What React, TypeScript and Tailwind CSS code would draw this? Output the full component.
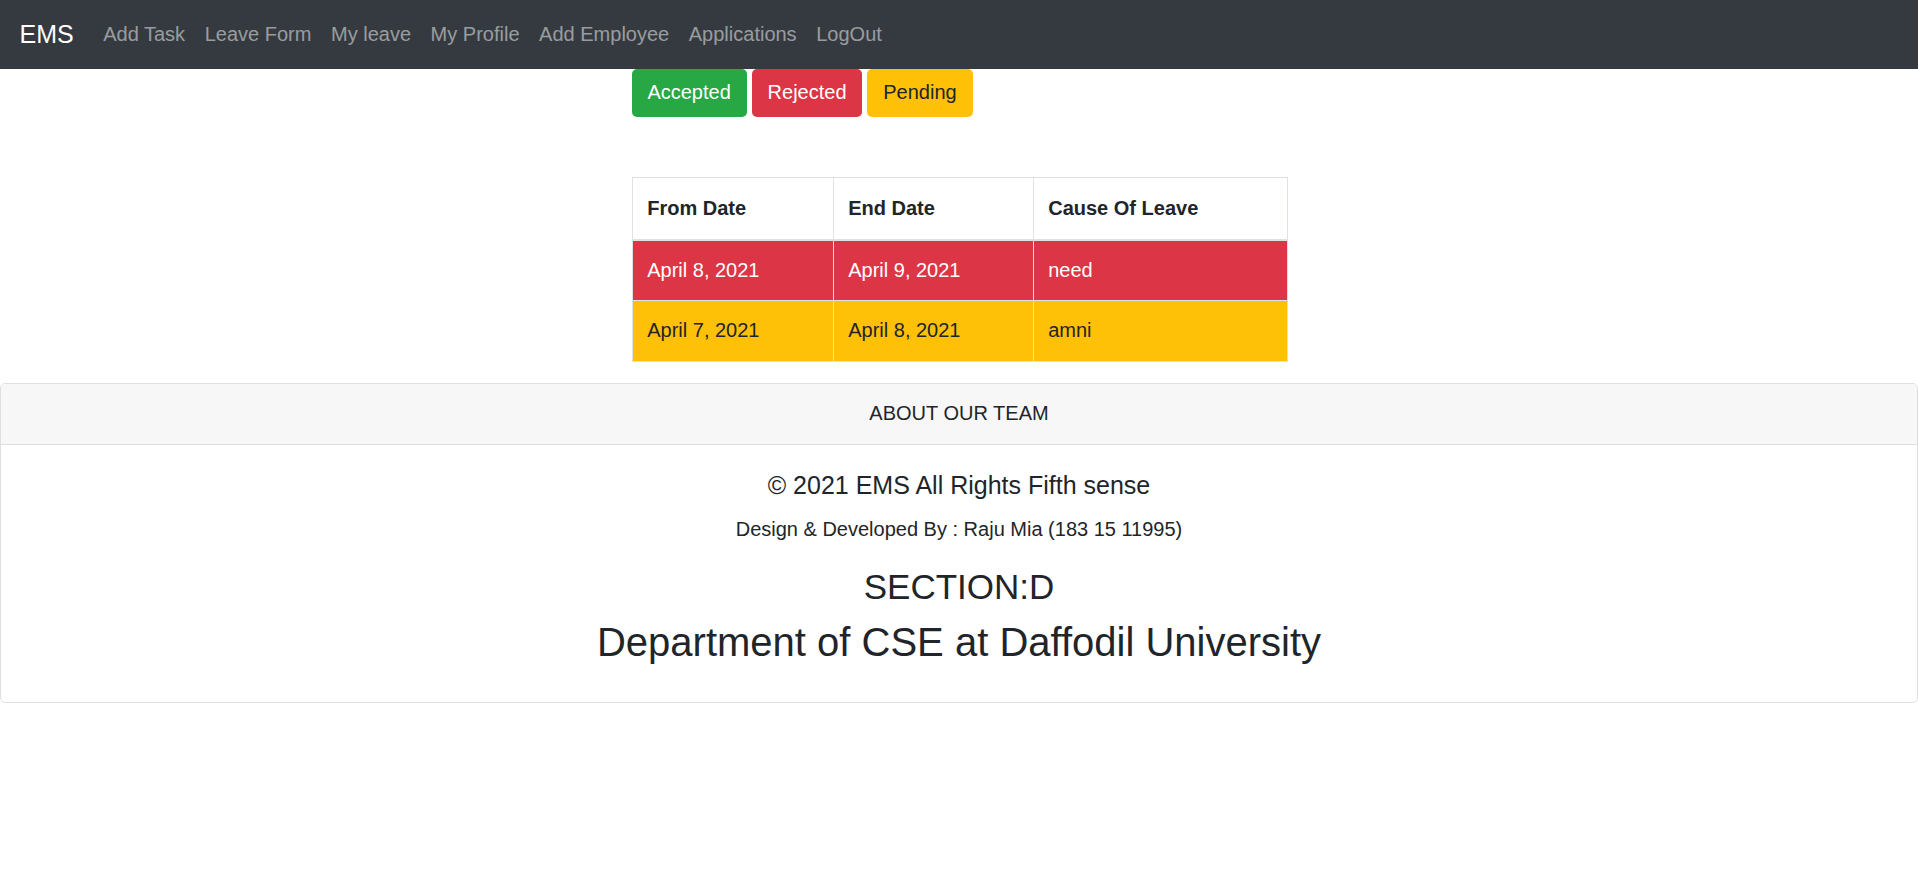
const navLinks = ['Add Task', 'Leave Form', 'My leave', 'My Profile', 'Add Employee', 'Applications', 'LogOut']

const leaves = [
  { from: 'April 8, 2021', to: 'April 9, 2021', cause: 'need', tone: 'bg-[#dc3545] text-white' },
  { from: 'April 7, 2021', to: 'April 8, 2021', cause: 'amni', tone: 'bg-[#ffc107] text-[#212529]' },
]

const App = () => {
  return (
    <div className="min-h-[890px] bg-white font-['Liberation_Sans',Arial,sans-serif] text-[20px] leading-[29.4px] text-[#212529]">
      {/* Navbar */}
      <nav className="h-[69px] bg-[#343a40] px-[19.6px] flex items-center">
        <a className="text-[25px] leading-[36.7px] text-white mr-[19.6px]">EMS</a>
        <div className="flex items-center">
          {navLinks.map((link) => (
            <a key={link} className="px-[9.8px] text-white/50">
              {link}
            </a>
          ))}
        </div>
      </nav>

      {/* Status filters + table */}
      <div className="w-[655px] mx-auto">
        <div className="flex gap-[5px]">
          <button className="h-[48px] px-[15.9px] rounded-[5px] bg-[#28a745] text-white">Accepted</button>
          <button className="h-[48px] px-[15.9px] rounded-[5px] bg-[#dc3545] text-white">Rejected</button>
          <button className="h-[48px] px-[15.9px] rounded-[5px] bg-[#ffc107] text-[#212529]">Pending</button>
        </div>

        <table className="mt-[60px] mb-[21px] w-[655px] table-fixed border-collapse">
          <colgroup>
            <col className="w-[201px]" />
            <col className="w-[200px]" />
            <col className="w-[254px]" />
          </colgroup>
          <thead>
            <tr className="h-[62px]">
              <th className="border border-[#dee2e6] border-b-[2.4px] px-[14.7px] text-left font-bold">From Date</th>
              <th className="border border-[#dee2e6] border-b-[2.4px] px-[14.7px] text-left font-bold">End Date</th>
              <th className="border border-[#dee2e6] border-b-[2.4px] px-[14.7px] text-left font-bold">Cause Of Leave</th>
            </tr>
          </thead>
          <tbody>
            {leaves.map((row) => (
              <tr key={row.from} className={`h-[61px] ${row.tone}`}>
                <td className="border border-[#dee2e6] px-[14.7px]">{row.from}</td>
                <td className="border border-[#dee2e6] px-[14.7px]">{row.to}</td>
                <td className="border border-[#dee2e6] px-[14.7px]">{row.cause}</td>
              </tr>
            ))}
          </tbody>
        </table>
      </div>

      {/* Footer card */}
      <div className="border border-[#dfdfdf] rounded-[5px] overflow-hidden">
        <div className="h-[61px] bg-[#f7f7f7] border-b border-[#dfdfdf] flex items-center justify-center">
          ABOUT OUR TEAM
        </div>
        <div className="pt-[26px] pb-[36px] flex flex-col items-center text-center">
          <h5 className="text-[25px] leading-[29.4px]">© 2021 EMS All Rights Fifth sense</h5>
          <p className="mt-[14.6px]">Design &amp; Developed By : Raju Mia (183 15 11995)</p>
          <h3 className="mt-[22px] text-[35px] leading-[41px]">SECTION:D</h3>
          <h2 className="mt-[12px] text-[40px] leading-[47px]">Department of CSE at Daffodil University</h2>
        </div>
      </div>
    </div>
  )
}

export default App
